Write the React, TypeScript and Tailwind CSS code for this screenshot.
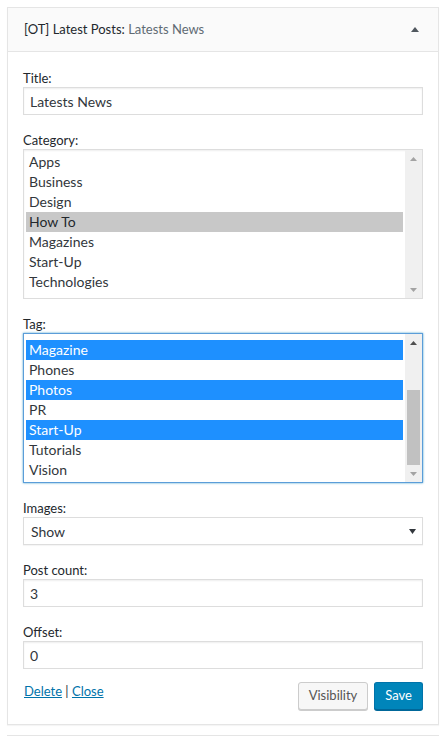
import React from "react";

const FONT = { fontFamily: 'Lato, "Liberation Sans", sans-serif' };

function UpArrow({ color }: { color: string }) {
  return (
    <svg width="7" height="4" viewBox="0 0 7 4">
      <path d="M0 4 L3.5 0 L7 4 Z" fill={color} />
    </svg>
  );
}
function DownArrow({ color }: { color: string }) {
  return (
    <svg width="7" height="4" viewBox="0 0 7 4">
      <path d="M0 0 L7 0 L3.5 4 Z" fill={color} />
    </svg>
  );
}

function Field({ label, children, first }: { label: string; children: React.ReactNode; first?: boolean }) {
  return (
    <div className={first ? "" : "mt-[17px]"}>
      <div className="h-[17px] text-[13px] leading-[17px] text-[#23282d]">{label}</div>
      {children}
    </div>
  );
}

function TextInput({ value }: { value: string }) {
  return (
    <div className="flex h-[28px] items-center border border-[#dddddd] bg-white px-[6px] text-[14px] text-[#32373c] shadow-[inset_0_1px_2px_rgba(0,0,0,0.07)]">
      {value}
    </div>
  );
}

export default function App() {
  const categories = ["Apps", "Business", "Design", "How To", "Magazines", "Start-Up", "Technologies"];
  const tags = [
    { t: "How To", s: false },
    { t: "Magazine", s: true },
    { t: "Phones", s: false },
    { t: "Photos", s: true },
    { t: "PR", s: false },
    { t: "Start-Up", s: true },
    { t: "Tutorials", s: false },
    { t: "Vision", s: false },
  ];
  return (
    <div className="h-[736px] overflow-hidden bg-white pl-[7px] pt-[7px]" style={FONT}>
      <div className="w-[432px] border border-[#e5e5e5] bg-white shadow-[0_1px_1px_rgba(0,0,0,0.04)]">
        <div className="flex h-[44px] items-center justify-between border-b border-[#e5e5e5] bg-[#fafafa] pl-[16px] pr-[19px]">
          <div className="text-[13px] text-[#23282d]">
            [OT] Latest Posts: <span className="text-[#606a73]">Latests News</span>
          </div>
          <svg width="8" height="5" viewBox="0 0 8 5" className="mb-[1px]">
            <path d="M0 5 L4 0 L8 5 Z" fill="#50575e" />
          </svg>
        </div>
        <div className="px-[15px] pb-[14px] pt-[18px]">
          <Field label="Title:" first>
            <TextInput value="Latests News" />
          </Field>
          <Field label="Category:">
            <div className="flex h-[150px] border border-[#dddddd] bg-white shadow-[inset_0_1px_2px_rgba(0,0,0,0.07)]">
              <div className="flex-1 p-[2px]">
                {categories.map((c) => (
                  <div
                    key={c}
                    className={
                      "h-[20px] pl-[3px] text-[14px] leading-[20px] " +
                      (c === "How To" ? "bg-[#c8c8c8] text-[#23282d]" : "text-[#32373c]")
                    }
                  >
                    {c}
                  </div>
                ))}
              </div>
              <div className="flex w-[17px] flex-col bg-[#f0f0f0]">
                <div className="flex h-[17px] items-center justify-center">
                  <UpArrow color="#a3a3a3" />
                </div>
                <div className="flex-1" />
                <div className="flex h-[17px] items-center justify-center">
                  <DownArrow color="#a3a3a3" />
                </div>
              </div>
            </div>
          </Field>
          <Field label="Tag:">
            <div className="flex h-[150px] border border-[#5b9dd9] bg-white shadow-[0_0_2px_rgba(30,140,190,0.8)]">
              <div className="flex-1 p-[2px]">
                <div className="h-[144px] overflow-hidden">
                  <div className="-mt-[16px]">
                    {tags.map((t) => (
                      <div
                        key={t.t}
                        className={
                          "h-[20px] pl-[3px] text-[14px] leading-[20px] " +
                          (t.s ? "bg-[#1e90ff] text-white" : "text-[#32373c]")
                        }
                      >
                        {t.t}
                      </div>
                    ))}
                  </div>
                </div>
              </div>
              <div className="flex w-[17px] flex-col bg-[#f0f0f0]">
                <div className="flex h-[17px] items-center justify-center">
                  <UpArrow color="#505050" />
                </div>
                <div className="h-[39px]" />
                <div className="mx-[2px] h-[75px] bg-[#c1c1c1]" />
                <div className="flex h-[17px] items-center justify-center">
                  <DownArrow color="#a3a3a3" />
                </div>
              </div>
            </div>
          </Field>
          <Field label="Images:">
            <div className="flex h-[28px] items-center justify-between border border-[#dddddd] bg-white pl-[7px] pr-[6px] text-[14px] text-[#32373c] shadow-[0_1px_1px_rgba(0,0,0,0.04)]">
              <span>Show</span>
              <svg width="7" height="5" viewBox="0 0 7 5">
                <path d="M0 0 L7 0 L3.5 5 Z" fill="#32373c" />
              </svg>
            </div>
          </Field>
          <Field label="Post count:">
            <TextInput value="3" />
          </Field>
          <Field label="Offset:">
            <TextInput value="0" />
          </Field>
          <div className="mt-[13px] flex items-start justify-between">
            <div className="pl-[1px] text-[13px] leading-[18px] text-[#32373c]">
              <a className="text-[#0073aa] underline">Delete</a> | <a className="text-[#0073aa] underline">Close</a>
            </div>
            <div className="flex gap-[6px]">
              <button className="h-[28px] rounded-[3px] border border-[#cccccc] bg-[#f7f7f7] px-[10px] text-[13px] text-[#555555] shadow-[0_1px_0_#cccccc]">
                Visibility
              </button>
              <button className="h-[28px] rounded-[3px] border border-[#0073aa] border-b-[#006799] bg-[#0085ba] px-[10px] text-[13px] text-white shadow-[0_1px_0_#006799]">
                Save
              </button>
            </div>
          </div>
        </div>
      </div>
      <div className="mt-[10px] h-[20px] w-[432px] border border-[#e5e5e5] bg-white" />
    </div>
  );
}
